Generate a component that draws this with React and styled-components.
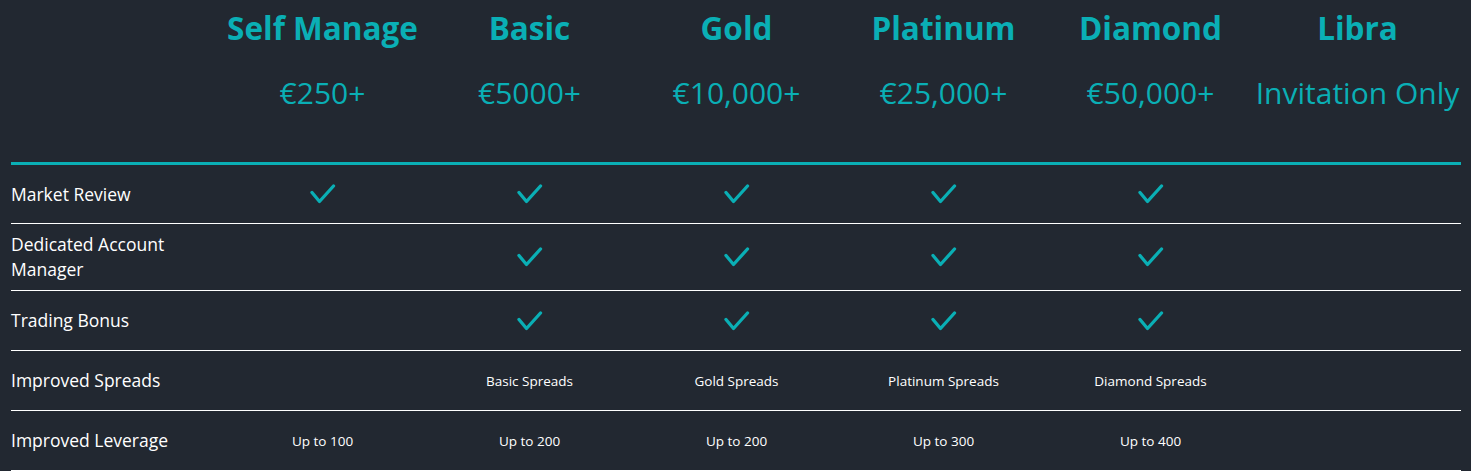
import React from "react";
import styled, { createGlobalStyle } from "styled-components";

const Global = createGlobalStyle`
  html, body { margin: 0; padding: 0; background: #222831; }
  body { font-family: "Open Sans", "DejaVu Sans", sans-serif; }
`;

const TEAL = "#0aafb5";

const Page = styled.div`
  background: #222831;
  width: 1471px;
  height: 471px;
  padding: 0 10px 0 11px;
  box-sizing: border-box;
  overflow: hidden;
`;

const Grid = styled.div`
  display: grid;
  grid-template-columns: 208px repeat(6, 207px);
`;

const HeadCell = styled.div`
  height: 165px;
  box-sizing: border-box;
  border-bottom: 3px solid ${TEAL};
  display: flex;
  flex-direction: column;
  align-items: center;
  color: ${TEAL};
`;

const PlanName = styled.div`
  font-size: 31.5px;
  font-weight: 700;
  line-height: 36px;
  margin-top: 10px;
  white-space: nowrap;
`;

const Price = styled.div`
  font-size: 30px;
  font-weight: 400;
  line-height: 36px;
  margin-top: 29px;
  white-space: nowrap;
`;

const Label = styled.div`
  height: ${(p) => p.$h}px;
  box-sizing: border-box;
  border-bottom: 1px solid #ffffff;
  display: flex;
  align-items: center;
  color: #ffffff;
  font-size: 17.5px;
  line-height: 25px;
  padding-right: 30px;
`;

const Cell = styled.div`
  height: ${(p) => p.$h}px;
  box-sizing: border-box;
  border-bottom: 1px solid #ffffff;
  display: flex;
  align-items: center;
  justify-content: center;
  color: #ffffff;
  font-size: 13.5px;
  font-weight: 500;
  white-space: nowrap;
`;

const Check = () => (
  <svg width="26" height="22" viewBox="0 0 26 22">
    <path
      d="M2 9.5 L9.5 18.5 L23.5 3"
      fill="none"
      stroke={TEAL}
      strokeWidth="3.3"
      strokeLinecap="round"
      strokeLinejoin="round"
    />
  </svg>
);

const plans = [
  { name: "Self Manage", price: "€250+" },
  { name: "Basic", price: "€5000+" },
  { name: "Gold", price: "€10,000+" },
  { name: "Platinum", price: "€25,000+" },
  { name: "Diamond", price: "€50,000+" },
  { name: "Libra", price: "Invitation Only" },
];

const C = "check";
const rows = [
  { label: "Market Review", h: 59, cells: [C, C, C, C, C, ""] },
  { label: "Dedicated Account Manager", h: 67, cells: ["", C, C, C, C, ""] },
  { label: "Trading Bonus", h: 60, cells: ["", C, C, C, C, ""] },
  {
    label: "Improved Spreads",
    h: 60,
    cells: ["", "Basic Spreads", "Gold Spreads", "Platinum Spreads", "Diamond Spreads", ""],
  },
  {
    label: "Improved Leverage",
    h: 60,
    cells: ["Up to 100", "Up to 200", "Up to 200", "Up to 300", "Up to 400", ""],
  },
];

export default function App() {
  return (
    <Page>
      <Global />
      <Grid>
        <HeadCell />
        {plans.map((p) => (
          <HeadCell key={p.name}>
            <PlanName>{p.name}</PlanName>
            <Price>{p.price}</Price>
          </HeadCell>
        ))}
        {rows.map((r) => (
          <React.Fragment key={r.label}>
            <Label $h={r.h}>{r.label}</Label>
            {r.cells.map((c, i) => (
              <Cell key={i} $h={r.h}>
                {c === C ? <Check /> : c}
              </Cell>
            ))}
          </React.Fragment>
        ))}
      </Grid>
    </Page>
  );
}
